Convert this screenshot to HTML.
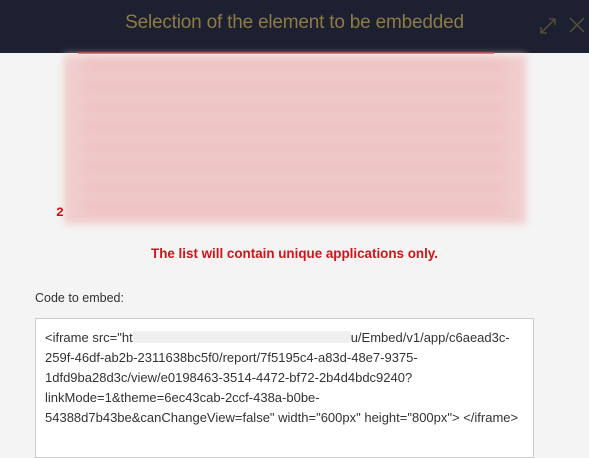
<!DOCTYPE html>
<html><head><style>
*{margin:0;padding:0;box-sizing:border-box}
body{width:589px;height:442px;overflow:hidden;background:#f4f4f4;font-family:"Liberation Sans",sans-serif;position:relative}
.hdr{position:absolute;left:0;top:0;width:589px;height:53px;background:#1c2030}
.title{position:absolute;left:0;width:589px;top:12px;text-align:center;font-size:19px;color:#8c7b45;letter-spacing:-0.2px}
.blur{position:absolute;left:64px;top:55px;width:462px;height:169px;background:#f0cccc;filter:blur(4px)}
.blur2{position:absolute;left:85px;top:62px;width:420px;height:150px;background:repeating-linear-gradient(#efc0c0 0 10px,#f0cccc 10px 20px);filter:blur(5px)}
.redtop{position:absolute;left:78px;top:52px;width:416px;height:2px;background:#d02020;opacity:.8}
.two{position:absolute;left:56px;top:205px;font:bold 13px "Liberation Mono",monospace;color:#d01010}
.msg{position:absolute;left:0;width:589px;top:246px;text-align:center;font-weight:bold;font-size:13.4px;color:#d0141a}
.lbl{position:absolute;left:35px;top:291px;font-size:12.5px;color:#333}
.box{position:absolute;left:35px;top:318px;width:499px;height:140px;background:#fff;border:1px solid #ccc;padding:9px 9px;font-size:13px;line-height:20px;color:#333}
.mask{display:inline-block;width:218px;height:12px;background:#f0f0f0;vertical-align:-1px}
</style></head><body>
<div class="hdr"><div class="title">Selection of the element to be embedded</div>
<svg style="position:absolute;left:538px;top:16px" width="20" height="20" viewBox="0 0 20 20"><path d="M3 17L17 3M11 3h6v6M3 11v6h6" stroke="#5a5238" stroke-width="1.3" fill="none"/></svg>
<svg style="position:absolute;left:568px;top:16px" width="18" height="18" viewBox="0 0 18 18"><path d="M2 2L16 16M16 2L2 16" stroke="#5a5238" stroke-width="1.5" fill="none"/></svg>
</div>
<div class="redtop"></div>
<div class="blur"></div><div class="blur2"></div>
<div class="two">2</div>
<div class="msg">The list will contain unique applications only.</div>
<div class="lbl">Code to embed:</div>
<div class="box">&lt;iframe src="ht<span class="mask"></span>u/Embed/v1/app/c6aead3c-<br>259f-46df-ab2b-2311638bc5f0/report/7f5195c4-a83d-48e7-9375-<br>1dfd9ba28d3c/view/e0198463-3514-4472-bf72-2b4d4bdc9240?<br>linkMode=1&amp;theme=6ec43cab-2ccf-438a-b0be-<br>54388d7b43be&amp;canChangeView=false" width="600px" height="800px"&gt; &lt;/iframe&gt;</div>
</body></html>
